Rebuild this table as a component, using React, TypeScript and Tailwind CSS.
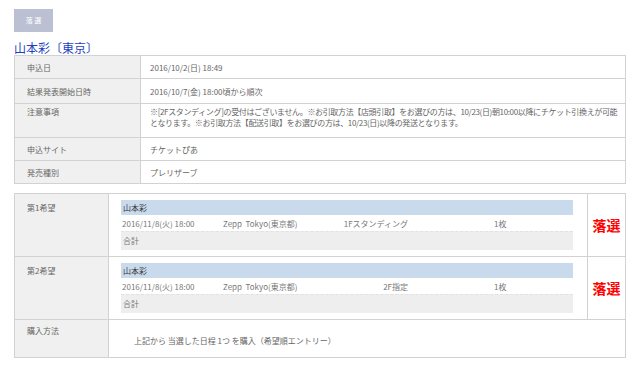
const font = { fontFamily: '"Noto Sans CJK JP", "Noto Sans", sans-serif' };

const infoRows = [
  { label: "申込日", value: "2016/10/2(日) 18:49", h: "h-[23px]" },
  { label: "結果発表開始日時", value: "2016/10/7(金) 18:00頃から順次", h: "h-[25px]" },
  {
    label: "注意事項",
    value: (
      <div className="whitespace-nowrap tracking-[-0.35px]">
        ※[2Fスタンディング]の受付はございません。※お引取方法【店頭引取】をお選びの方は、10/23(日)朝10:00以降にチケット引換えが可能
        <br />
        となります。※お引取方法【配送引取】をお選びの方は、10/23(日)以降の発送となります。
      </div>
    ),
    h: "h-[34px]",
    top: true,
  },
  { label: "申込サイト", value: "チケットぴあ", h: "h-[23px]" },
  { label: "発売種別", value: "プレリザーブ", h: "h-[23px]" },
];

const wishes = [
  { label: "第1希望", seat: "1Fスタンディング" },
  { label: "第2希望", seat: "2F指定" },
];

function Wish({ seat }: { seat: string }) {
  return (
    <div className="pt-[6px] pl-[12px] pr-[14px] pb-[5px]">
      <div className="h-[15px] bg-[#c9daed] pl-[2px] text-[8px] leading-[15px] text-[#3a3a3a]">山本彩</div>
      <div className="flex h-[16px] items-center text-[8px] text-[#777]">
        <span className="w-[102px] pl-[1px]">2016/11/8(火) 18:00</span>
        <span className="w-[100px] whitespace-pre">Zepp  Tokyo(東京都)</span>
        <span className="w-[85px] text-right">{seat}</span>
        <span className="pl-[86px]">1枚</span>
      </div>
      <div className="h-[19px] border-t border-dashed border-[#e2e2e2] bg-[#eeeeee] pl-[2px] text-[8px] leading-[18px] text-[#777]">
        合計
      </div>
    </div>
  );
}

export default function App() {
  return (
    <div className="min-h-[369px] w-[640px] bg-white pl-[14px] pt-[9px] text-[#666]" style={font}>
      <div className="flex h-[23px] w-[39px] items-center justify-center bg-[#bcc0d3] text-[7px] text-white">
        落 選
      </div>
      <div className="mt-[8px] text-[12px] leading-[16px] text-[#1d3fc2]">山本彩〔東京〕</div>

      <table className="mt-[-1px] w-[612px] table-fixed border-collapse border border-[#d6d6d6] text-[8px] leading-[11px]">
        <tbody>
          {infoRows.map((r) => (
            <tr key={r.label} className={r.h}>
              <td
                className={`w-[126px] border border-[#d2d2d2] bg-[#f0f0f0] pl-[12px] font-normal ${
                  r.top ? "align-top pt-[2px]" : "align-middle"
                }`}
              >
                {r.label}
              </td>
              <td className={`border border-[#d2d2d2] pl-[9px] ${r.top ? "align-top pt-[2px]" : "align-middle"}`}>
                {r.value}
              </td>
            </tr>
          ))}
        </tbody>
      </table>

      <table className="mt-[9px] w-[612px] table-fixed border-collapse border border-[#d6d6d6] text-[8px] leading-[11px]">
        <tbody>
          {wishes.map((w) => (
            <tr key={w.label} className="h-[63px]">
              <td className="w-[94px] border border-[#d2d2d2] bg-[#f0f0f0] pl-[12px] pt-[8px] align-top">{w.label}</td>
              <td className="border border-[#d2d2d2] p-0 align-top">
                <Wish seat={w.seat} />
              </td>
              <td className="w-[38px] border border-[#d2d2d2] text-center align-middle text-[14px] font-bold leading-[16px] text-[#ff0000]">
                落選
              </td>
            </tr>
          ))}
          <tr className="h-[38px]">
            <td className="w-[94px] border border-[#d2d2d2] bg-[#f0f0f0] pl-[12px] pt-[5px] align-top">購入方法</td>
            <td colSpan={2} className="border border-[#d2d2d2] pl-[25px] pt-[4px] align-middle">
              上記から 当選した日程 1つ を購入（希望順エントリー）
            </td>
          </tr>
        </tbody>
      </table>
    </div>
  );
}
